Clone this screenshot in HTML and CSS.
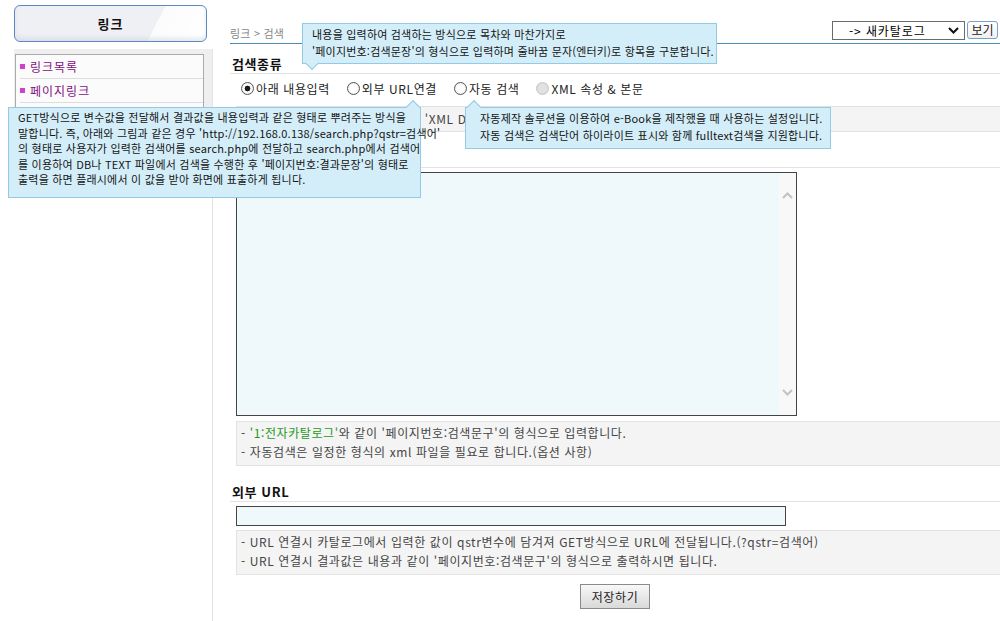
FILE: index.html
```html
<!DOCTYPE html>
<html lang="ko">
<head>
    <meta charset="UTF-8">
    <title>링크 - 검색</title>
    <link rel="stylesheet" href="styles.css">
</head>
<body>
    <div class="page">
        <aside class="side">
            <div class="side-title">링크</div>
            <div class="side-body">
                <div class="menu-wrap">
                    <ul class="menu">
                        <li><a href="#">링크목록</a></li>
                        <li><a href="#">페이지링크</a></li>
                        <li><a href="#">검색</a></li>
                    </ul>
                </div>
            </div>
        </aside>

        <main class="main">
            <div class="topbar">
                <div class="crumb">링크 &gt; 검색</div>
                <form class="catalog">
                    <span class="select-wrap">
                        <select class="catalog-select">
                            <option>-&gt; 새카탈로그</option>
                        </select>
                        <svg class="select-arrow" width="11" height="7" viewBox="0 0 11 7"><path d="M1 1 L5.5 5.5 L10 1" fill="none" stroke="#111" stroke-width="2"/></svg>
                    </span>
                    <button type="button" class="btn-view">보기</button>
                </form>
            </div>

            <h4 class="sec-title">검색종류</h4>
            <div class="radios">
                <label class="radio"><input type="radio" name="kind" checked> 아래 내용입력</label>
                <label class="radio"><input type="radio" name="kind"> 외부 URL연결</label>
                <label class="radio"><input type="radio" name="kind"> 자동 검색</label>
                <label class="radio is-disabled"><input type="radio" name="kind" disabled> XML 속성 &amp; 본문</label>
            </div>
            <div class="note">
                <p>- 방식에 따라 입력 형식이 다르며, 'XML DB' 형식은 별도의 설정이 필요합니다.</p>
            </div>

            <h4 class="sec-title">내용입력</h4>
            <div class="editor">
                <textarea class="editor-text"></textarea>
                <div class="vscroll">
                    <svg width="11" height="7" viewBox="0 0 11 7"><path d="M1 6 L5.5 1.5 L10 6" fill="none" stroke="#c2c2c2" stroke-width="2"/></svg>
                    <svg width="11" height="7" viewBox="0 0 11 7"><path d="M1 1 L5.5 5.5 L10 1" fill="none" stroke="#c2c2c2" stroke-width="2"/></svg>
                </div>
            </div>
            <div class="note">
                <p>- <span class="green">'1:전자카탈로그'</span>와 같이 '페이지번호:검색문구'의 형식으로 입력합니다.</p>
                <p>- 자동검색은 일정한 형식의 xml 파일을 필요로 합니다.(옵션 사항)</p>
            </div>

            <h4 class="sec-title">외부 URL</h4>
            <input type="text" class="url-input">
            <div class="note">
                <p>- URL 연결시 카탈로그에서 입력한 값이 qstr변수에 담겨져 GET방식으로 URL에 전달됩니다.(?qstr=검색어)</p>
                <p>- URL 연결시 결과값은 내용과 같이 '페이지번호:검색문구'의 형식으로 출력하시면 됩니다.</p>
            </div>

            <div class="actions">
                <button type="button" class="btn-save">저장하기</button>
            </div>
        </main>
    </div>

    <div class="tip tip-content">
        내용을 입력하여 검색하는 방식으로 목차와 마찬가지로<br>
        '페이지번호:검색문장'의 형식으로 입력하며 줄바꿈 문자(엔터키)로 항목을 구분합니다.
    </div>
    <div class="tip tip-url">
        GET방식으로 변수값을 전달해서 결과값을 내용입력과 같은 형태로 뿌려주는 방식을<br>
        말합니다. 즉, 아래와 그림과 같은 경우 'http://192.168.0.138/search.php?qstr=검색어'<br>
        의 형태로 사용자가 입력한 검색어를 search.php에 전달하고 search.php에서 검색어<br>
        를 이용하여 DB나 TEXT 파일에서 검색을 수행한 후 '페이지번호:결과문장'의 형태로<br>
        출력을 하면 플래시에서 이 값을 받아 화면에 표출하게 됩니다.
    </div>
    <div class="tip tip-auto">
        자동제작 솔루션을 이용하여 e-Book을 제작했을 때 사용하는 설정입니다.<br>
        자동 검색은 검색단어 하이라이트 표시와 함께 fulltext검색을 지원합니다.
    </div>
</body>
</html>
```

FILE: styles.css
```css
body {
    margin: 0;
    font-family: "Noto Sans CJK KR", "Noto Sans", sans-serif;
    font-size: 12px;
    color: #333;
    background: #fff;
}
.page {
    display: flex;
    min-height: 100vh;
}

/* sidebar */
.side {
    width: 213px;
    flex-shrink: 0;
    display: flex;
    flex-direction: column;
}
.side-title {
    margin: 5px 6px 0 14px;
    height: 35px;
    line-height: 35px;
    text-align: center;
    font-weight: bold;
    font-size: 13px;
    color: #111;
    letter-spacing: 1px;
    border: 1px solid #5d88c8;
    border-radius: 6px;
    background: linear-gradient(117deg, #eef0f4 0, #eef0f4 72%, #fbfbfc 72%, #fff 100%);
    box-shadow: inset 0 -3px 4px rgba(180, 190, 210, 0.35);
}
.side-body {
    flex: 1;
    margin: 7px 0 0 14px;
    border-right: 1px solid #e3e3e3;
}
.menu-wrap {
    background: #efefef;
    padding: 5px 8px 4px 1px;
}
.menu {
    list-style: none;
    margin: 0;
    padding: 0 0 2px;
    background: #fbfbfb;
    border: 1px solid #aaa;
}
.menu li {
    margin-left: 4px;
    height: 23px;
    line-height: 23px;
    border-bottom: 1px solid #ddd;
}
.menu li:last-child {
    border-bottom: none;
}
.menu a {
    color: #82107f;
    text-decoration: none;
    letter-spacing: 1px;
    display: flex;
    align-items: center;
    gap: 5px;
}
.menu a::before {
    content: "";
    width: 5px;
    height: 5px;
    background: #d03fd0;
}

/* main */
.main {
    flex: 1;
    min-width: 0;
    padding-left: 17px;
    letter-spacing: 0.6px;
}
.topbar {
    display: flex;
    justify-content: space-between;
    align-items: center;
    margin-top: 21px;
    height: 22px;
    padding-right: 2px;
    border-bottom: 1px solid #4a8db6;
}
.topbar .crumb {
    font-size: 11px;
    color: #888;
    letter-spacing: 0.2px;
    align-self: flex-end;
    line-height: 20px;
}
.catalog {
    display: flex;
    align-items: flex-start;
    gap: 2px;
    align-self: flex-start;
}
.select-wrap {
    position: relative;
    display: block;
}
.catalog-select {
    appearance: none;
    width: 133px;
    height: 19px;
    margin: 0;
    padding: 0 0 0 16px;
    border: 1px solid #6a6a6a;
    border-radius: 0;
    background: #fff;
    font-family: inherit;
    font-size: 12px;
    letter-spacing: 0.9px;
    color: #000;
    line-height: 17px;
}
.select-arrow {
    position: absolute;
    right: 6px;
    top: 6px;
    pointer-events: none;
}
.btn-view {
    height: 18px;
    width: 31px;
    padding: 0;
    font-family: inherit;
    font-size: 12px;
    line-height: 16px;
    color: #222;
    border: 1px solid #7b9fcc;
    border-radius: 3px;
    background: linear-gradient(#fff, #f0f0f0);
}

.sec-title {
    margin: 0;
    height: 17px;
    padding: 12px 0 0 2px;
    line-height: 16px;
    font-size: 13px;
    font-weight: bold;
    color: #111;
    border-bottom: 1px solid #e2e2e2;
}
.editor + .note {
    margin-top: 5px;
}
.note + .sec-title {
    margin-top: 6px;
}
.url-input + .note {
    margin-top: 4px;
}
.radios {
    display: flex;
    align-items: center;
    height: 28px;
    padding-left: 11px;
    margin-bottom: 4px;
    color: #222;
}
.radio {
    display: flex;
    align-items: center;
    gap: 2px;
    margin-right: 17px;
}
.radio input {
    appearance: none;
    width: 13px;
    height: 13px;
    margin: 0;
    border: 1px solid #555;
    border-radius: 50%;
    background: radial-gradient(circle, #fff 40%, #e4e4e4 100%);
}
.radio input:checked {
    background: radial-gradient(circle, #1a1a1a 0, #1a1a1a 2.6px, #fff 3.2px, #e4e4e4 100%);
}
.radio input:disabled {
    border-color: #c4c4c4;
    background: radial-gradient(circle, #e2e2e2 40%, #d6d6d6 100%);
}

.note {
    margin-left: 6px;
    padding: 1px 4px 4px;
    background: #f4f4f4;
    border: 1px solid #e2e2e2;
    border-right: none;
    color: #444;
    line-height: 19px;
}
.radios + .note {
    padding: 2px 4px 3px;
}
.note p {
    margin: 0;
    white-space: nowrap;
}
.note .green {
    color: #1b9a1b;
}

.editor {
    display: flex;
    margin: 4px 0 0 6px;
    width: 561px;
    height: 244px;
    box-sizing: border-box;
    border: 1px solid #444;
}
.editor-text {
    flex: 1;
    margin: 0;
    border: none;
    resize: none;
    overflow: hidden;
    background: #eff8fb;
    outline: none;
}
.vscroll {
    width: 17px;
    background: #f8f8f8;
    display: flex;
    flex-direction: column;
    justify-content: space-between;
    align-items: center;
    padding: 19px 0;
}
.url-input {
    display: block;
    margin: 4px 0 0 6px;
    width: 550px;
    height: 20px;
    box-sizing: border-box;
    border: 1px solid #444;
    background: #eff8fb;
    padding: 0 4px;
}
.actions {
    margin-top: 9px;
    text-align: center;
}
.btn-save {
    width: 70px;
    height: 25px;
    padding: 0;
    font-family: inherit;
    font-size: 12px;
    letter-spacing: 0.6px;
    color: #222;
    border: 1px solid #8a8a8a;
    background: linear-gradient(#f8f8f8, #d9d9d9);
}

/* tooltips */
.tip {
    position: absolute;
    z-index: 5;
    box-sizing: border-box;
    background: #d4eef9;
    border: 1px solid #93cbe6;
    font-size: 11px;
    color: #151515;
    white-space: nowrap;
    letter-spacing: 0.2px;
}
.tip::after {
    content: "";
    position: absolute;
    width: 9px;
    height: 9px;
    background: #d4eef9;
    transform: rotate(45deg);
}
.tip-content {
    left: 302px;
    top: 23px;
    width: 415px;
    height: 41px;
    padding: 2px 0 0 9px;
    line-height: 17px;
}
.tip-content::after {
    left: 4px;
    bottom: -5px;
    border-right: 1px solid #93cbe6;
    border-bottom: 1px solid #93cbe6;
}
.tip-url {
    left: 8px;
    top: 107px;
    width: 413px;
    height: 91px;
    padding: 2px 0 0 9px;
    line-height: 15.5px;
}
.tip-url::after {
    right: 2px;
    top: -6px;
    border-left: 1px solid #93cbe6;
    border-top: 1px solid #93cbe6;
}
.tip-auto {
    left: 465px;
    top: 107px;
    width: 366px;
    height: 42px;
    padding: 2px 0 0 14px;
    line-height: 17px;
}
.tip-auto::after {
    left: 3px;
    top: -6px;
    border-left: 1px solid #93cbe6;
    border-top: 1px solid #93cbe6;
}
```
